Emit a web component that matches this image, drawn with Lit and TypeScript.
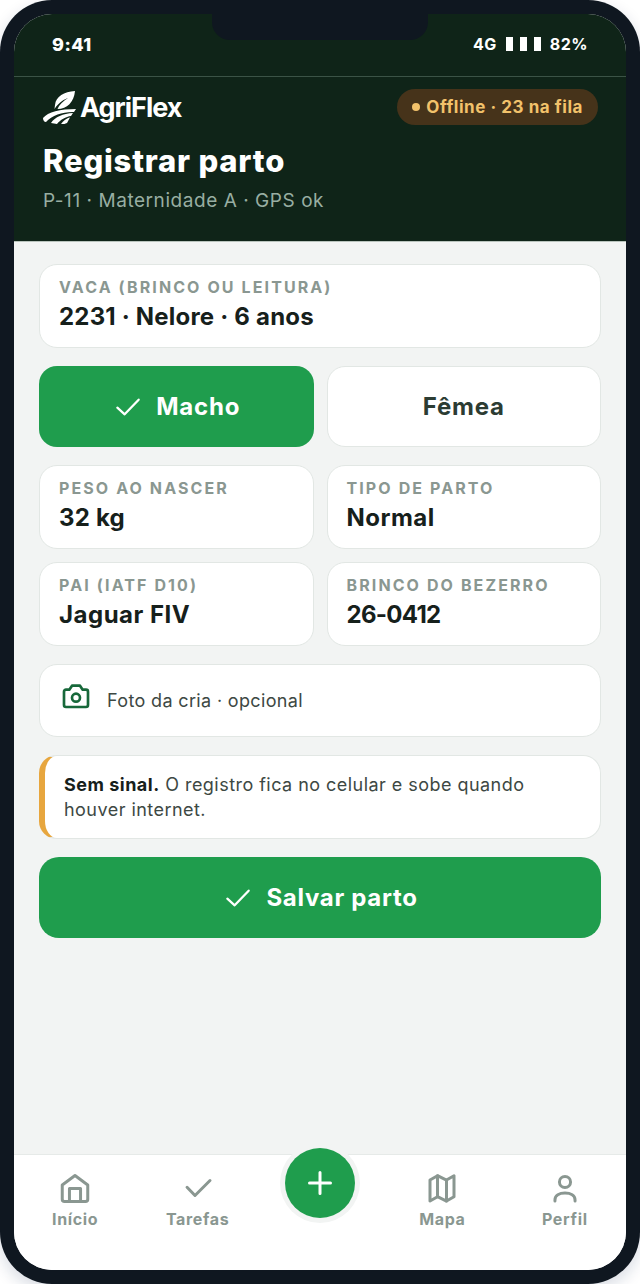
import { LitElement, html, css, svg } from "lit";
import { customElement } from "lit/decorators.js";

const check = () => html`
  <svg width="32" height="32" viewBox="0 0 24 24" fill="none" stroke="currentColor" stroke-width="1.700" stroke-linecap="round" stroke-linejoin="round">
    <path d="M4 12.500 9.500 17.500 20 6.500" />
  </svg>
`;

const navIcons: Record<string, unknown> = {
  home: svg`<path d="M3.500 10 12 3.700l8.500 6.300v9.500a1.500 1.500 0 0 1-1.500 1.500H5a1.500 1.500 0 0 1-1.500-1.500z" /><path d="M8.300 21v-8.700h7.400V21" />`,
  check: svg`<path d="M4.700 11.500 10 17 20 7" />`,
  map: svg`<path d="M4 6.700 9 3.800l6 2.900 5-2.900v14l-5 2.900-6-2.900-5 2.900z" /><path d="M9 3.800v14M15 6.700v14" />`,
  user: svg`<circle cx="12" cy="8" r="3.700" /><path d="M5.300 20.700V20c0-3 3-4.700 6.700-4.700s6.700 1.700 6.700 4.700v.7" />`,
};

@customElement("app-root")
export class AppRoot extends LitElement {
  static styles = css`
    :host {
      display: block;
      width: 640px;
      height: 1284px;
      font-family: Inter, "Liberation Sans", sans-serif;
      background: #fff;
    }
    .phone {
      position: relative;
      box-sizing: border-box;
      width: 640px;
      height: 1284px;
      padding: 14px;
      border-radius: 52px;
      background: #0f1720;
      box-shadow: 0 6px 16px rgba(15, 40, 80, 0.16);
    }
    .notch {
      position: absolute;
      top: 14px;
      left: 212px;
      width: 216px;
      height: 26px;
      border-radius: 0 0 18px 18px;
      background: #0f1720;
    }
    .screen {
      display: flex;
      flex-direction: column;
      height: 100%;
      border-radius: 38px;
      overflow: hidden;
      background: #f2f4f3;
    }
    .status {
      display: flex;
      justify-content: space-between;
      align-items: center;
      box-sizing: border-box;
      height: 63px;
      padding: 0 38px 2px;
      background: #0f2418;
      border-bottom: 1px solid #3b5346;
      color: #fff;
      font-size: 18px;
      font-weight: 800;
      letter-spacing: 0.5px;
    }
    .status-right {
      display: flex;
      align-items: center;
      gap: 9px;
      font-size: 16px;
      font-weight: 700;
      letter-spacing: 0.5px;
    }
    .bars {
      display: flex;
      gap: 7px;
    }
    .bars i {
      display: block;
      width: 7px;
      height: 14px;
      background: #fff;
    }
    header {
      box-sizing: border-box;
      height: 165px;
      padding: 12px 28px 0 29px;
      background: #0f2418;
      border-bottom: 1px solid #b9c4bd;
      color: #fff;
    }
    .top {
      display: flex;
      justify-content: space-between;
      align-items: center;
    }
    .logo {
      display: flex;
      align-items: center;
      gap: 4px;
      margin-left: -1px;
      font-size: 27px;
      font-weight: 700;
      letter-spacing: -1px;
    }
    .pill {
      display: flex;
      align-items: center;
      gap: 6px;
      padding: 8px 15px;
      border-radius: 18px;
      background: #46331a;
      color: #f2c26b;
      font-size: 17px;
      font-weight: 700;
      line-height: 20px;
      letter-spacing: 0.55px;
    }
    .pill i {
      display: block;
      width: 8px;
      height: 8px;
      border-radius: 50%;
      background: currentColor;
    }
    h1 {
      margin: 17px 0 0;
      font-size: 31px;
      line-height: 38px;
      font-weight: 800;
      letter-spacing: 0.8px;
    }
    .sub {
      margin-top: 9px;
      font-size: 19px;
      line-height: 24px;
      letter-spacing: 0.55px;
      color: #98aea2;
    }
    main {
      flex: 1;
      display: flex;
      flex-direction: column;
      gap: 18px;
      padding: 22px 25px;
    }
    .card {
      box-sizing: border-box;
      background: #fff;
      border: 1px solid #e2e7e4;
      border-radius: 18px;
    }
    .field {
      height: 84px;
      padding: 13px 19px;
    }
    .field .label {
      font-size: 16px;
      line-height: 19px;
      font-weight: 700;
      letter-spacing: 2.1px;
      color: #8a9791;
      text-transform: uppercase;
    }
    .field .value {
      margin-top: 5px;
      font-size: 24px;
      line-height: 30px;
      font-weight: 700;
      letter-spacing: 0.5px;
      color: #16201b;
    }
    .field .value.num {
      letter-spacing: -0.7px;
    }
    .field .value.long {
      letter-spacing: 0.2px;
    }
    .pair {
      display: grid;
      grid-template-columns: 1fr 1fr;
      gap: 13px;
    }
    .toggle {
      display: flex;
      align-items: center;
      justify-content: center;
      gap: 12px;
      height: 81px;
      box-sizing: border-box;
      border-radius: 18px;
      font-size: 24px;
      font-weight: 700;
      letter-spacing: 0.8px;
    }
    .toggle.on {
      background: #1f9d4d;
      color: #fff;
    }
    .toggle.off {
      background: #fff;
      border: 1px solid #e2e7e4;
      color: #2c3c33;
    }
    .photo {
      display: flex;
      align-items: center;
      gap: 15px;
      height: 73px;
      padding: 0 20px;
      font-size: 18px;
      letter-spacing: 0.35px;
      color: #3d4843;
    }
    .photo svg {
      margin-bottom: 8px;
    }
    .alert {
      height: 84px;
      padding: 16px 50px 16px 19px;
      border-left: 6px solid #e7a63e;
      font-size: 18px;
      line-height: 25px;
      letter-spacing: 0.46px;
      color: #3d4843;
    }
    .alert b {
      color: #16201b;
      font-weight: 700;
      letter-spacing: 0.5px;
    }
    .save {
      display: flex;
      align-items: center;
      justify-content: center;
      gap: 12px;
      height: 81px;
      border-radius: 20px;
      background: #1f9d4d;
      color: #fff;
      font-size: 24px;
      font-weight: 700;
      letter-spacing: 0.7px;
    }
    nav {
      position: relative;
      display: grid;
      grid-template-columns: repeat(5, 1fr);
      box-sizing: border-box;
      height: 116px;
      padding-top: 15px;
      background: #fff;
      border-top: 1px solid #e6eae8;
    }
    .tab {
      display: flex;
      flex-direction: column;
      align-items: center;
      gap: 3px;
      color: #8a9791;
      font-size: 16px;
      line-height: 20px;
      font-weight: 700;
      letter-spacing: 0.65px;
    }
    .tab svg {
      fill: none;
      stroke: currentColor;
      stroke-width: 2;
      stroke-linecap: round;
      stroke-linejoin: round;
    }
    .fab {
      position: absolute;
      top: -7px;
      left: 271px;
      display: flex;
      align-items: center;
      justify-content: center;
      width: 70px;
      height: 70px;
      border-radius: 50%;
      background: #1f9d4d;
      box-shadow: 0 0 0 5px #f2f4f3;
      color: #fff;
    }
  `;

  private field(label: string, value: string, kind = "") {
    return html`
      <div class="card field">
        <div class="label">${label}</div>
        <div class="value ${kind}">${value}</div>
      </div>
    `;
  }

  private tab(icon: string, label: string) {
    return html`
      <div class="tab">
        <svg width="36" height="36" viewBox="0 0 24 24">${navIcons[icon]}</svg>
        ${label}
      </div>
    `;
  }

  render() {
    return html`
      <div class="phone">
        <div class="screen">
          <div class="status">
            <span>9:41</span>
            <div class="status-right">
              <span>4G</span>
              <div class="bars"><i></i><i></i><i></i></div>
              <span>82%</span>
            </div>
          </div>
          <header>
            <div class="top">
              <div class="logo">
                <svg width="34" height="35" viewBox="0 0 34 35" fill="#fff">
                  <path d="M33 1C22 2 14 6 13 15l-.5 4C17 12 23 9 26 8c-5 3-9 7-10.500 11C25 19 32 12 33 1Z" />
                  <path d="M1 28c5-6 17-9 33-9l-2 3C22 21.500 10 25 4 32c-2 0-3-2-3-4Z" />
                  <path d="M9 33c4-6 12-9.500 22-10l-2 3c-5 .5-11 4-14 8Z" />
                  <path d="M19 34c2-3 6-6 9-6.500L25 33c-2 1-3 1-6 1Z" />
                </svg>
                <span>AgriFlex</span>
              </div>
              <div class="pill"><i></i><span>Offline · 23 na fila</span></div>
            </div>
            <h1>Registrar parto</h1>
            <div class="sub">P-11 · Maternidade A · GPS ok</div>
          </header>
          <main>
            ${this.field("Vaca (brinco ou leitura)", "2231 · Nelore · 6 anos", "long")}
            <div class="pair">
              <div class="toggle on">${check()}<span>Macho</span></div>
              <div class="toggle off">Fêmea</div>
            </div>
            <div class="pair">
              ${this.field("Peso ao nascer", "32 kg", "long")}
              ${this.field("Tipo de parto", "Normal")}
              ${this.field("Pai (IATF D10)", "Jaguar FIV")}
              ${this.field("Brinco do bezerro", "26-0412", "num")}
            </div>
            <div class="card photo">
              <svg width="32" height="32" viewBox="0 0 24 24" fill="none" stroke="#17683a" stroke-width="2" stroke-linecap="round" stroke-linejoin="round">
                <path d="M3 8a1.500 1.500 0 0 1 1.500-1.500H7L9 3.500h6l2 3h2.500A1.500 1.500 0 0 1 21 8v10a1.500 1.500 0 0 1-1.500 1.500h-15A1.500 1.500 0 0 1 3 18z" />
                <circle cx="12" cy="12.500" r="3" />
              </svg>
              <span>Foto da cria · opcional</span>
            </div>
            <div class="card alert">
              <b>Sem sinal.</b> O registro fica no celular e sobe quando houver internet.
            </div>
            <div class="save">${check()}<span>Salvar parto</span></div>
          </main>
          <nav>
            ${this.tab("home", "Início")}
            ${this.tab("check", "Tarefas")}
            <div></div>
            ${this.tab("map", "Mapa")}
            ${this.tab("user", "Perfil")}
            <div class="fab">
              <svg width="36" height="36" viewBox="0 0 24 24" fill="none" stroke="currentColor" stroke-width="2" stroke-linecap="round">
                <path d="M12 5v14M5 12h14" />
              </svg>
            </div>
          </nav>
        </div>
        <div class="notch"></div>
      </div>
    `;
  }
}
